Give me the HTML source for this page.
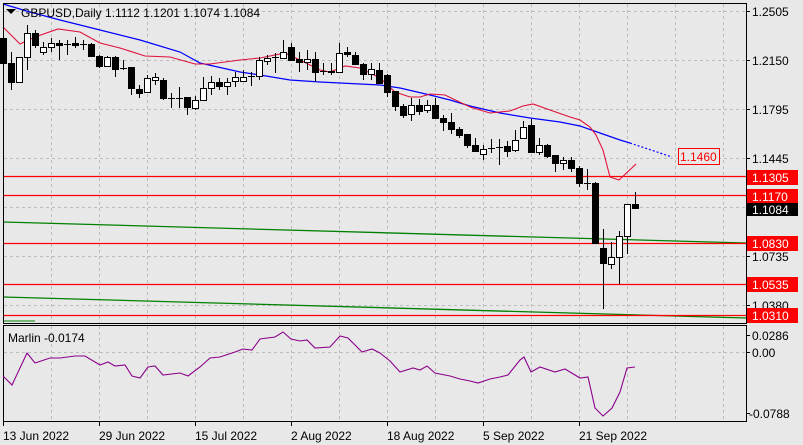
<!DOCTYPE html>
<html><head><meta charset="utf-8"><style>
html,body{margin:0;padding:0;background:#e8e8e8;}
svg{display:block;font-family:"Liberation Sans",Tahoma,sans-serif;font-size:12px;}
</style></head><body>
<svg id="s" width="803" height="445" viewBox="0 0 803 445" xmlns="http://www.w3.org/2000/svg">
<rect width="803" height="445" fill="#e8e8e8"/>
<g id="grid" stroke="#bdbdbd" stroke-dasharray="3,3" stroke-width="1"></g>
<!-- green lines -->
<polyline points="3,222 746,243" stroke="#008000" fill="none" stroke-width="1.3"/>
<polyline points="3,297 746,318" stroke="#008000" fill="none" stroke-width="1.3"/>
<polyline points="3,321 35,321" stroke="#008000" fill="none" stroke-width="1"/>
<!-- red horizontals -->
<g stroke="#ff0000" stroke-width="1.2">
<line x1="3" y1="176.5" x2="746" y2="176.5"/>
<line x1="3" y1="195.5" x2="746" y2="195.5"/>
<line x1="3" y1="243.5" x2="746" y2="243.5"/>
<line x1="3" y1="284.5" x2="746" y2="284.5"/>
<line x1="3" y1="315.5" x2="746" y2="315.5"/>
</g>
<!-- blue MA -->
<polyline fill="none" stroke="#0000ff" stroke-width="1.2" points="3,4 30,12 60,20 100,30 140,40 180,52 200,63 240,72 260,75 290,80 320,82 360,84 380,85 400,88 430,95 450,100 470,106 500,113 530,118 560,122 580,126 600,133 620,140 630,143"/>
<polyline fill="none" stroke="#0000ff" stroke-width="1.2" stroke-dasharray="2,2" points="630,143 672,157"/>
<!-- red MA -->
<polyline fill="none" stroke="#e0103a" stroke-width="1.1" points="3,27 20,44 35,37 58,29 80,32 100,43 120,48 145,56 170,57 195,64 210,64 240,60 260,58 285,53 300,60 320,70 330,72 345,66 360,68 380,78 395,92 410,97 420,97 430,94 445,95 470,107 490,113 510,111 523,106 533,104 550,110 570,117 580,120 590,127 596,135 603,150 610,177 619,180 636,164"/>
<g id="candles"></g>
<!-- frames -->
<rect x="3.5" y="3.5" width="743" height="320" fill="none" stroke="#000"/>
<rect x="3.5" y="325.5" width="743" height="96" fill="none" stroke="#000"/>
<!-- marlin -->
<polyline fill="none" stroke="#8b008b" stroke-width="1.1" points="3,376 12,385 27,353 35,363 50,358 60,358 75,356 85,356 100,365 108,362 115,366 125,365 132,376 140,378 148,367 155,366 163,375 180,373 188,376 200,367 210,358 220,357 235,352 243,349 252,350 260,339 275,337 283,332 291,339 300,341 307,340 315,348 330,347 340,336 348,338 362,352 372,349 380,353 390,361 400,372 413,368 420,370 427,366 435,373 450,376 460,379 470,381 478,383 490,379 500,377 508,375 520,360 524,357 531,372 540,367 555,372 565,369 580,378 588,377 595,408 603,416 612,408 620,392 627,368 635,367"/>
<text x="8" y="342" fill="#000">Marlin -0.0174</text>
<!-- header -->
<polygon points="6,9 16,9 11,14" fill="#000"/>
<text x="21" y="17" fill="#000">GBPUSD,Daily  1.1112 1.1201 1.1074 1.1084</text>
<!-- right axis -->
<g fill="#000" id="ax">
<text x="752" y="16">1.2505</text>
<text x="752" y="65">1.2150</text>
<text x="752" y="114">1.1795</text>
<text x="752" y="163">1.1445</text>
<text x="752" y="261">1.0735</text>
<text x="752" y="310">1.0380</text>
<text x="752" y="340">0.0286</text>
<text x="752" y="357">0.00</text>
<text x="749" y="418">-0.0788</text>
</g>
<g id="ticks" stroke="#000"></g>
<rect x="747" y="170" width="51" height="15" fill="#ff0000"/><text x="752" y="182" fill="#fff">1.1305</text>
<rect x="747" y="189" width="51" height="15" fill="#ff0000"/><text x="752" y="201" fill="#fff">1.1170</text>
<rect x="747" y="203" width="51" height="13" fill="#000"/><text x="752" y="214" fill="#fff">1.1084</text>
<rect x="747" y="236" width="51" height="15" fill="#ff0000"/><text x="752" y="248" fill="#fff">1.0830</text>
<rect x="747" y="277" width="51" height="15" fill="#ff0000"/><text x="752" y="289" fill="#fff">1.0535</text>
<rect x="747" y="308" width="51" height="15" fill="#ff0000"/><text x="752" y="320" fill="#fff">1.0310</text>
<rect x="678.5" y="148.5" width="41" height="16" fill="#e8e8e8" stroke="#ff0000"/><text x="680" y="161" fill="#ff0000">1.1460</text>
<!-- dates -->
<g fill="#000">
<text x="3" y="440">13 Jun 2022</text>
<text x="99" y="440">29 Jun 2022</text>
<text x="195" y="440">15 Jul 2022</text>
<text x="291" y="440">2 Aug 2022</text>
<text x="387" y="440">18 Aug 2022</text>
<text x="483" y="440">5 Sep 2022</text>
<text x="579" y="440">21 Sep 2022</text>
</g>
</svg>
<script>
var NS="http://www.w3.org/2000/svg";
function el(p,t,a){var e=document.createElementNS(NS,t);for(var k in a)e.setAttribute(k,a[k]);p.appendChild(e);return e;}
var g=document.getElementById('grid');
[11,60,109,158,207,256,305,352].forEach(function(y){el(g,'line',{x1:4,y1:y+.5,x2:746,y2:y+.5});});
for(var x=51;x<746;x+=48){el(g,'line',{x1:x+.5,y1:4,x2:x+.5,y2:323});el(g,'line',{x1:x+.5,y1:326,x2:x+.5,y2:421});}
var t=document.getElementById('ticks');
[11,60,109,158,207,256,305,335,352,413].forEach(function(y){el(t,'line',{x1:746,y1:y+.5,x2:750,y2:y+.5});});
[3,99,195,291,387,483,579].forEach(function(x){el(t,'line',{x1:x+.5,y1:421,x2:x+.5,y2:426});});
// [bodyTop, bodyBottom, wickTop, wickBottom, bull(1)/bear(0)]
var C=[[38,63,30,70,0],[63,82,52,90,0],[57,82,57,83,1],[33,57,25,70,1],[33,45,30,48,0],[47,52,42,55,1],[43,47,38,52,1],[43,45,40,60,0],[44,44,40,55,0],[43,45,37,48,0],
[44,44,40,50,0],[44,56,43,57,0],[56,66,55,68,0],[57,66,56,67,1],[57,69,56,77,0],[68,68,60,70,0],[67,88,67,95,0],[89,93,85,98,0],[78,92,75,93,1],[77,80,73,85,1],
[80,98,78,100,0],[98,98,93,108,0],[98,98,87,108,0],[97,107,97,115,0],[100,108,96,110,1],[88,100,77,100,1],[82,88,76,95,1],[82,86,78,90,0],[82,86,78,95,1],[77,81,72,87,1],
[77,81,70,82,1],[76,76,72,86,0],[60,76,57,80,1],[58,61,55,65,1],[57,57,53,73,0],[52,58,40,58,1],[47,60,43,60,0],[59,62,52,72,0],[59,62,50,70,1],[59,72,52,82,0],
[71,71,63,75,0],[71,72,63,75,0],[53,72,43,72,1],[52,54,47,57,0],[55,64,52,64,0],[64,74,63,80,0],[69,74,63,80,1],[70,83,63,83,0],[75,92,74,97,0],[91,106,91,111,0],
[106,115,104,118,0],[105,114,98,121,1],[105,111,99,115,0],[105,110,100,113,1],[105,118,98,118,0],[118,122,115,131,0],[122,129,113,134,0],[129,135,127,138,0],[134,145,134,148,0],[145,151,138,152,0],
[149,154,145,160,1],[148,148,139,153,0],[147,147,139,165,0],[146,151,141,157,0],[140,150,130,152,1],[127,138,121,138,1],[125,152,119,152,0],[145,152,138,155,1],[145,156,144,158,0],[155,163,155,172,0],
[160,163,157,170,1],[160,168,157,172,0],[168,183,166,187,0],[183,183,169,190,0],[183,243,182,243,0],[248,263,229,309,0],[257,264,242,269,1],[236,257,231,284,1],[204,236,204,254,1],[204,208,192,209,0]];
var cg=document.getElementById('candles');
C.forEach(function(c,i){var x=3+8*i;
 el(cg,'line',{x1:x+.5,y1:c[2],x2:x+.5,y2:c[3],stroke:'#000','stroke-width':1});
 var h=Math.max(1,c[1]-c[0]);
 if(c[1]-c[0]<1){el(cg,'line',{x1:x-3,y1:c[0]+.5,x2:x+4,y2:c[0]+.5,stroke:'#000'});}
 else el(cg,'rect',{x:x-2.5,y:c[0]+.5,width:6,height:h,fill:c[4]?'#fff':'#000',stroke:'#000','stroke-width':1});
});
</script>
</body></html>
